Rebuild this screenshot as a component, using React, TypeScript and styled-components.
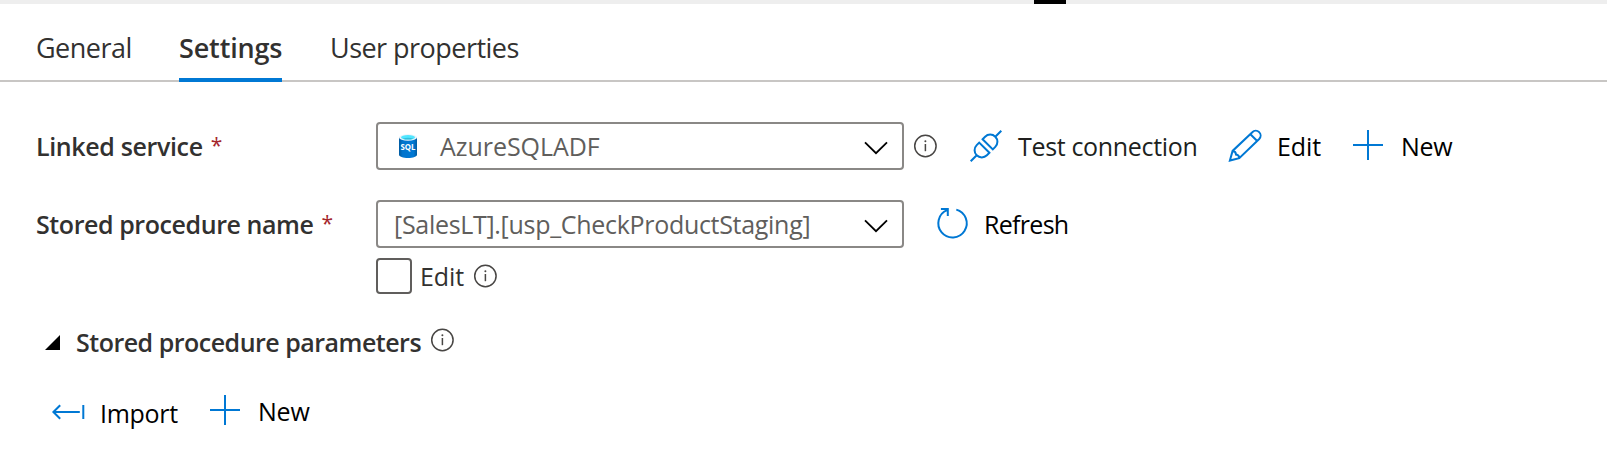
import React from 'react';
import styled, { createGlobalStyle } from 'styled-components';

const GlobalStyle = createGlobalStyle`
  * { box-sizing: border-box; }
  body {
    margin: 0;
    background: #fff;
    color: #323130;
    font-family: "Open Sans", "Noto Sans", sans-serif;
    font-size: 25px;
    overflow: hidden;
  }
`;

const Panel = styled.main`
  width: 1607px;
  height: 458px;
  background: #fff;
`;

const Splitter = styled.div`
  height: 4px;
  background: #eee;
  padding-left: 1034px;
`;

const SplitterHandle = styled.div`
  width: 32px;
  height: 4px;
  background: #000;
`;

const Tabs = styled.nav`
  display: flex;
  gap: 48px;
  height: 78px;
  padding-left: 36px;
  border-bottom: 2px solid #c8c6c4;
`;

const Tab = styled.button<{ $active?: boolean; $width: number; $tracking: number }>`
  width: ${p => p.$width}px;
  height: 78px;
  padding: 0 0 ${p => (p.$active ? 0 : 4)}px;
  line-height: 87px;
  border: 0;
  border-bottom: ${p => (p.$active ? '4px solid #0078d4' : '0')};
  background: none;
  display: flex;
  color: #323130;
  font-family: inherit;
  font-size: 27px;
  font-weight: ${p => (p.$active ? 600 : 400)};
  letter-spacing: ${p => p.$tracking}px;
  white-space: nowrap;
`;

const Form = styled.section`
  padding: 40px 0 0 36px;
`;

const Row = styled.div<{ $height: number; $top?: number; $indent?: number }>`
  display: flex;
  align-items: center;
  height: ${p => p.$height}px;
  margin-top: ${p => p.$top ?? 0}px;
  padding-left: ${p => p.$indent ?? 0}px;
`;

const Text = styled.span<{ $tracking: number }>`
  letter-spacing: ${p => p.$tracking}px;
  white-space: nowrap;
  line-height: 36px;
`;

const Label = styled.label`
  display: flex;
  gap: 8px;
  width: 340px;
  font-weight: 600;
`;

const Required = styled.span`
  color: #a4262c;
  font-size: 21px;
  line-height: 34px;
  font-weight: 400;
`;

const Select = styled.div<{ $inset: number }>`
  display: flex;
  align-items: center;
  width: 528px;
  height: 48px;
  padding: 0 13px 0 ${p => p.$inset}px;
  border: 2px solid #8a8886;
  border-radius: 4px;
  color: #605e5c;
`;

const SelectValue = styled(Text)`
  flex: 1;
`;

const SqlSvg = styled.svg`
  margin: 0 22px 0 0;
  flex: none;
`;

const InfoSvg = styled.svg<{ $left: number; $raise?: number }>`
  flex: none;
  margin: 0 0 ${p => p.$raise ?? 1}px ${p => p.$left}px;
`;

const Action = styled.button<{ $width?: number; $left?: number; $gap?: number; $drop?: number; $ink?: string }>`
  display: flex;
  align-items: center;
  gap: ${p => p.$gap ?? 16}px;
  width: ${p => (p.$width ? `${p.$width}px` : 'auto')};
  margin: ${p => p.$drop ?? 0}px 0 0 ${p => p.$left ?? 0}px;
  padding: 0;
  border: 0;
  background: none;
  color: ${p => p.$ink ?? '#000'};
  font: inherit;
`;

const Glyph = styled.svg`
  flex: none;
  overflow: visible;
  fill: none;
  stroke: #0078d4;
  stroke-width: 2;
`;

const Checkbox = styled.span`
  width: 36px;
  height: 36px;
  margin-right: 8px;
  border: 2px solid #605e5c;
  border-radius: 4px;
`;

const Heading = styled.h2`
  margin: 0 0 0 16px;
  width: 345px;
  font-size: 25px;
  font-weight: 600;
  display: flex;
`;

const Info = ({ left, raise }: { left: number; raise?: number }) => (
  <InfoSvg $left={left} $raise={raise} width="24" height="24" viewBox="0 0 24 24" fill="none" stroke="#484644">
    <circle cx="12.4" cy="12" r="10.7" strokeWidth="1.5" />
    <path d="M12.4 10v7.2" strokeWidth="1.5" />
    <circle cx="12.4" cy="7.3" r="1" fill="#484644" stroke="none" />
  </InfoSvg>
);

const Chevron = () => (
  <svg width="26" height="26" viewBox="0 0 26 26" fill="none" stroke="#000" strokeWidth="1.8">
    <path d="M2 9.300 13 20.200 24 9.300" />
  </svg>
);

const SqlIcon = () => (
  <SqlSvg width="20" height="26" viewBox="0 0 20 26">
    <defs>
      <linearGradient id="body" x1="0" x2="1">
        <stop offset="0" stopColor="#005ba1" />
        <stop offset=".2" stopColor="#0074cd" />
        <stop offset=".8" stopColor="#0078d4" />
        <stop offset="1" stopColor="#005ba1" />
      </linearGradient>
    </defs>
    <path d="M1 4.5v17.3C1 23.6 5 25 10 25s9-1.4 9-3.2V4.5z" fill="url(#body)" />
    <ellipse cx="10" cy="4.5" rx="9" ry="3.3" fill="#e8f3fa" />
    <ellipse cx="10" cy="4.3" rx="7" ry="2.3" fill="#50e6ff" />
    <path d="M4.5 5.7q5.500-2 11 0-5.500 1.800-11 0z" fill="#32bedd" />
    <text x="10" y="17.300" textAnchor="middle" textLength="15" lengthAdjust="spacingAndGlyphs" fontSize="8" fontWeight="700" fill="#fff">SQL</text>
  </SqlSvg>
);

const PlugIcon = () => (
  <Glyph width="34" height="34" viewBox="0 0 34 34">
    <path d="M13.6 10.2 23.8 20.4 26.3 17.9A7.2 7.2 0 0 0 16.1 7.7zM26.3 7.7 32.3 1.7M20.4 23.8 10.2 13.6 7.7 16.1A7.2 7.2 0 0 0 17.9 26.3zM7.7 26.3 1.7 32.3" />
  </Glyph>
);

const PencilIcon = () => (
  <Glyph width="34" height="34" viewBox="0 0 34 34">
    <path d="M2.9 31.5 5.6 21.9 25.3 3.2a4.7 4.7 0 0 1 6.9 6.800L12.300 29.200zM23.400 5.200 30.200 12M5.600 21.900q3.300.2 3.400 3.600 3.200.4 3.300 3.700" />
  </Glyph>
);

const PlusIcon = () => (
  <Glyph width="34" height="34" viewBox="0 0 34 34">
    <path d="M17 1v30M2 16h30" />
  </Glyph>
);

const RefreshIcon = () => (
  <Glyph width="34" height="34" viewBox="0 0 34 34">
    <path d="M20.3 2.600A14.200 14.200 0 1 1 11 3.200M4.900 2.100h6.900v6.900" />
  </Glyph>
);

const ImportIcon = () => (
  <Glyph width="34" height="34" viewBox="0 0 34 34">
    <path d="M2.3 16h26.500M9.200 9.200 2.400 16l6.800 6.800M32.300 9v14" />
  </Glyph>
);

const Triangle = () => (
  <svg width="15" height="15" viewBox="0 0 15 15">
    <path d="M15 0v15H0z" />
  </svg>
);

export default function App() {
  return (
    <Panel>
      <GlobalStyle />
      <Splitter><SplitterHandle /></Splitter>
      <Tabs>
        <Tab $width={95} $tracking={-0.52}>General</Tab>
        <Tab $active $width={103} $tracking={-0.15}>Settings</Tab>
        <Tab $width={190} $tracking={-0.53}>User properties</Tab>
      </Tabs>
      <Form>
        <Row $height={48}>
          <Label><Text $tracking={-0.36}>Linked service</Text><Required>*</Required></Label>
          <Select $inset={20}>
            <SqlIcon />
            <SelectValue $tracking={-0.04}>AzureSQLADF</SelectValue>
            <Chevron />
          </Select>
          <Info left={9} />
          <Action $left={32} $width={258} $gap={15} $ink="#201f1e"><PlugIcon /><Text $tracking={-0.33}>Test connection</Text></Action>
          <Action $width={124}><PencilIcon /><Text $tracking={-0.1}>Edit</Text></Action>
          <Action><PlusIcon /><Text $tracking={-0.3}>New</Text></Action>
        </Row>
        <Row $height={48} $top={30}>
          <Label><Text $tracking={-0.42}>Stored procedure name</Text><Required>*</Required></Label>
          <Select $inset={16}>
            <SelectValue $tracking={-0.3}>[SalesLT].[usp_CheckProductStaging]</SelectValue>
            <Chevron />
          </Select>
          <Action $left={32} $gap={14}><RefreshIcon /><Text $tracking={-0.7}>Refresh</Text></Action>
        </Row>
        <Row $height={36} $top={10} $indent={340}>
          <Checkbox />
          <Text $tracking={-0.1}>Edit</Text>
          <Info left={9} />
        </Row>
        <Row $height={36} $top={30} $indent={9}>
          <Triangle />
          <Heading><Text $tracking={-0.5}>Stored procedure parameters</Text></Heading>
          <Info left={9} raise={4} />
        </Row>
        <Row $height={36} $top={33} $indent={15}>
          <Action $width={157} $gap={15} $drop={4}><ImportIcon /><Text $tracking={-0.28}>Import</Text></Action>
          <Action><PlusIcon /><Text $tracking={-0.2}>New</Text></Action>
        </Row>
      </Form>
    </Panel>
  );
}
